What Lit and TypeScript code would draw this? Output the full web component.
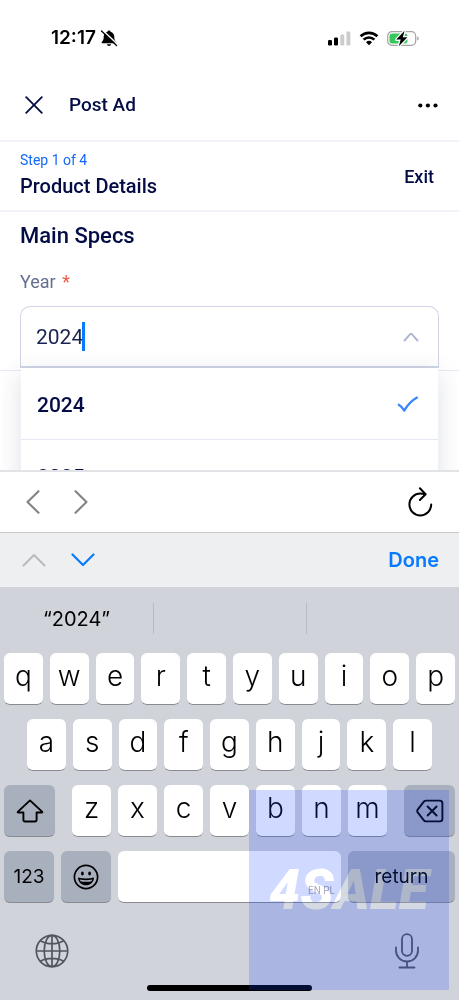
import { LitElement, html, css, svg } from "lit";
import { customElement, state } from "lit/decorators.js";

const icon = (w: number, h: number, body: unknown) =>
  html`<svg width=${w} height=${h} viewBox="0 0 ${w} ${h}" fill="none" aria-hidden="true">${body}</svg>`;

const bellOff = icon(18, 18, svg`
  <path d="M9 1.5c-.9 0-1.5.6-1.6 1.3C5 3.6 3.700 5.500 3.700 7.800c0 2.600-.5 3.700-1.700 5-.7.8-.5 1.500.5 1.500h13c1 0 1.200-.7.5-1.500-1.200-1.300-1.700-2.400-1.700-5 0-2.300-1.300-4.200-3.700-5C10.500 2.100 9.900 1.500 9 1.500z" fill="#000"/>
  <path d="M6.900 15.200h4.200c-.2 1-1 1.700-2.100 1.700s-1.900-.7-2.100-1.700z" fill="#000"/>
  <path d="M2.700 1.200 17.600 15.500" stroke="#fff" stroke-width="1.500"/>
  <path d="M1.500 2 16.500 16.500" stroke="#000" stroke-width="1.300" stroke-linecap="round"/>`);

const signal = icon(23, 15, svg`
  <rect x="0" y="9" width="4" height="5.500" rx="1.300" fill="#000"/>
  <rect x="6" y="6.500" width="4" height="8" rx="1.300" fill="#000"/>
  <rect x="12.300" y="3.500" width="4" height="11" rx="1.300" fill="#ccc"/>
  <rect x="18.400" y="0.500" width="4" height="14" rx="1.300" fill="#ccc"/>`);

const wifi = icon(20, 15, svg`
  <path d="M1.600 5.300a12 12 0 0 1 16.800 0" stroke="#000" stroke-width="2.700"/>
  <path d="M4.600 8.700a7.700 7.700 0 0 1 10.800 0" stroke="#000" stroke-width="2.500"/>
  <path d="M10 14.200 7 11.300a4.300 4.300 0 0 1 6 0z" fill="#000"/>`);

const battery = icon(32, 17, svg`
  <rect x="0.700" y="1.700" width="28" height="13.600" rx="4.300" stroke="#a3a3a3" stroke-width="1.200"/>
  <path d="M30.200 6.600c1 .3 1.500 1 1.500 1.900s-.5 1.600-1.500 1.900z" fill="#a3a3a3"/>
  <rect x="2.500" y="3.500" width="18" height="10" rx="2.700" fill="#34c759"/>
  <path d="M17.600.8 9.200 9.600h4.500l-1.900 6.600 8.600-8.900h-4.600z" fill="#000" stroke="#fff" stroke-width="2.600" paint-order="stroke" stroke-linejoin="round"/>`);

const close = icon(18, 18, svg`<path d="M1.200 1.200 16.800 16.800M16.800 1.200 1.200 16.800" stroke="#030c45" stroke-width="1.800" stroke-linecap="round"/>`);
const dots = icon(20, 5, svg`<circle cx="2.300" cy="2.500" r="2.100" fill="#000"/><circle cx="9.900" cy="2.500" r="2.100" fill="#000"/><circle cx="17.500" cy="2.500" r="2.100" fill="#000"/>`);
const caretUp = icon(16, 10, svg`<path d="m1.500 8.500 5.700-6.300q.8-.8 1.600 0l5.700 6.300" stroke="#b0b8d0" stroke-width="2" stroke-linecap="round"/>`);
const check = icon(22, 17, svg`<path d="M1.800 8.800c2.500 1.500 3.900 3.300 5.500 5.800C10.700 8.800 14.500 4.700 20 1.600" stroke="#3b86fb" stroke-width="2.300" stroke-linecap="round" stroke-linejoin="round"/>`);
const back = icon(14, 24, svg`<path d="M12.500 1.200 1.500 12l11 10.800" stroke="#838386" stroke-width="2.100" stroke-linecap="round" stroke-linejoin="round"/>`);
const forward = icon(14, 24, svg`<path d="m1.500 1.200 11 10.800-11 10.800" stroke="#838386" stroke-width="2.100" stroke-linecap="round" stroke-linejoin="round"/>`);
const reload = icon(26, 30, svg`
  <path d="M24.200 17.500A10.900 10.900 0 1 1 13.300 6.600c1.700 0 3.300.2 4.900.6" stroke="#000" stroke-width="2" stroke-linecap="round"/>
  <path d="m12.900 1.300 5.700 5.900-5.700 5.800" stroke="#000" stroke-width="2" stroke-linecap="round" stroke-linejoin="round"/>`);
const prev = icon(24, 14, svg`<path d="M1.500 12.500 12 2l10.500 10.500" stroke="#b9babb" stroke-width="2" stroke-linecap="round" stroke-linejoin="round"/>`);
const next = icon(24, 14, svg`<path d="M1.500 1.500 12 12 22.500 1.500" stroke="#087aff" stroke-width="2.200" stroke-linecap="round" stroke-linejoin="round"/>`);
const shift = icon(28, 24, svg`<path d="M14 1.400 2 12.600q-.8.900.4.900h5v7.200q0 1.800 1.800 1.800h9.600q1.800 0 1.800-1.800v-7.200h5q1.200 0 .4-.9z" stroke="#000" stroke-width="1.900" stroke-linejoin="round"/>`);
const erase = icon(28, 24, svg`
  <path d="M10.200 1.600h13.600q2.600 0 2.600 2.600v15.600q0 2.600-2.600 2.600H10.200q-1.300 0-2.200-.9l-6.300-8.100q-1-1.400 0-2.800L8 2.500q.9-.9 2.200-.9z" stroke="#000" stroke-width="1.900"/>
  <path d="m11.600 7.500 9 9m0-9-9 9" stroke="#000" stroke-width="1.900" stroke-linecap="round"/>`);
const smiley = icon(26, 26, svg`
  <circle cx="13" cy="13" r="11.600" stroke="#000" stroke-width="1.700"/>
  <ellipse cx="9.400" cy="9.600" rx="1.400" ry="2" fill="#000"/><ellipse cx="16.600" cy="9.600" rx="1.400" ry="2" fill="#000"/>
  <path d="M5 13.500c5 1.300 11 1.300 16 0-.2 4.700-3.500 7.800-8 7.800s-7.800-3.100-8-7.800z" fill="#000"/>
  <path d="M6.800 15.500c4 1 8.400 1 12.400 0l-.7 1.700c-3.500.8-7.500.8-11 0z" fill="#a9b0bd"/>`);
const globe = icon(34, 34, svg`
  <g stroke="#50555f" stroke-width="1.700"><circle cx="17" cy="17" r="15.700"/><ellipse cx="17" cy="17" rx="7.800" ry="15.700"/>
  <path d="M17 1.300v31.400M1.300 17h31.400M5.300 6.700c6.500 4 16.900 4 23.400 0M5.300 27.300c6.500-4 16.900-4 23.400 0"/></g>`);
const mic = icon(26, 36, svg`
  <g stroke="#50555f" stroke-width="1.800" stroke-linecap="round"><rect x="8" y="1.200" width="10" height="21.600" rx="5"/>
  <path d="M2 14.500v3a11 11 0 0 0 22 0v-3M13 28.500v6M5.500 34.500h15"/></g>`);

@customElement("app-root")
class AppRoot extends LitElement {
  @state() private year = "2024";

  static styles = css`
    :host {
      display: flex;
      flex-direction: column;
      position: relative;
      height: 100vh;
      overflow: hidden;
      background: #fff;
      color: #030c45;
      font-family: Roboto, "Open Sans", sans-serif;
    }
    * { box-sizing: border-box; }
    svg { display: block; flex: none; }
    button {
      display: flex;
      align-items: center;
      justify-content: center;
      margin: 0;
      padding: 0;
      border: 0;
      background: none;
      color: inherit;
      font: inherit;
    }
    h1, h2, h3, p { margin: 0; font-weight: 500; }
    .status {
      display: flex;
      align-items: center;
      flex: none;
      height: 72px;
      padding: 4px 40px 0 51px;
      color: #000;
      font: 600 19px/24px Inter, sans-serif;
    }
    .status .clock { margin-right: 4px; }
    .status .levels { display: flex; align-items: center; gap: 8px; margin-left: auto; }
    .topbar {
      display: flex;
      align-items: center;
      flex: none;
      height: 70px;
      padding: 0 21px 2px 25px;
      border-bottom: 2px solid #f1f2f9;
    }
    .topbar h1 { flex: 1; margin-left: 26px; font-size: 19px; line-height: 24px; }
    .step {
      display: flex;
      align-items: center;
      justify-content: space-between;
      flex: none;
      height: 70px;
      padding: 0 25px 0 20px;
      border-bottom: 2px solid #f1f2f9;
    }
    .titles { padding-bottom: 4px; }
    .step p { color: #1468f8; font-size: 14px; line-height: 24px; font-weight: 400; }
    .step h2 { font-size: 20px; line-height: 28px; }
    .exit { font-size: 18px; font-weight: 500; }
    .content { flex: 1; min-height: 0; overflow: hidden; }
    .specs { padding: 10px 20px 2px; border-bottom: 1px solid #e6e8f3; }
    .specs h3 { font-size: 22px; line-height: 28px; }
    .label {
      display: block;
      padding: 20px 0 12px;
      color: #65708f;
      font-size: 18px;
      line-height: 24px;
    }
    .required { margin-left: 2px; color: #eb5a4b; }
    .combo { position: relative; }
    .field {
      display: flex;
      align-items: center;
      height: 62px;
      padding: 0 19px 0 15px;
      border: 1px solid #cfd5e4;
      border-bottom-width: 2px;
      border-radius: 10px 10px 0 0;
      background: #fff;
    }
    .field input {
      width: 46px;
      padding: 0;
      border: 0;
      outline: 0;
      background: none;
      color: #1a2452;
      font: 400 21px/28px Roboto, sans-serif;
    }
    .caret { width: 3px; height: 29px; background: #087aff; }
    .field button { margin-left: auto; }
    .menu {
      position: absolute;
      top: 100%;
      left: 1px;
      right: 1px;
      background: #fff;
      box-shadow: 0 6px 24px rgba(30, 45, 80, 0.15);
      clip-path: inset(-24px -20px -40px -20px);
    }
    .option {
      width: 100%;
      height: 72px;
      justify-content: space-between;
      padding: 2px 19px 0 16px;
      border-bottom: 1px solid #e6e8f3;
      font-size: 21px;
      line-height: 28px;
      font-weight: 500;
    }
    .browser {
      display: flex;
      align-items: center;
      flex: none;
      height: 63px;
      padding: 0 26px;
      gap: 34px;
      border-top: 2px solid #e2e3e6;
      border-bottom: 1px solid #c8c9cb;
      background: #fff;
    }
    .browser .reload { margin-left: auto; }
    .assist {
      display: flex;
      align-items: center;
      flex: none;
      height: 54px;
      padding: 0 20px 0 22px;
      gap: 25px;
      background: #eeeff1;
    }
    .done { margin-left: auto; color: #087aff; font: 600 20px/24px Inter, sans-serif; }
    .keyboard {
      flex: none;
      background: #d0d3da;
      color: #000;
      font-family: Inter, sans-serif;
    }
    .suggestions {
      display: grid;
      grid-template-columns: repeat(3, 1fr);
      padding: 16px 0 19px;
    }
    .suggestions button { height: 31px; border-left: 1px solid #b9bcc3; font-size: 20px; }
    .suggestions button:first-child { border: 0; }
    .keys { display: flex; flex-direction: column; gap: 14px; padding: 0 4px; }
    .row { display: flex; gap: 7px; }
    .middle { padding: 0 23px; }
    .letters { display: flex; flex: 1; gap: 7px; margin: 0 10px; }
    .key {
      flex: 1 1 0;
      min-width: 0;
      height: 52px;
      padding-bottom: 6px;
      border-bottom: 1px solid #898b90;
      border-radius: 6px;
      background: #fff;
      font-size: 28px;
      font-weight: 300;
      line-height: 32px;
    }
    .tool { padding: 0; background: #a9b0bd; font-size: 19px; font-weight: 400; }
    .wide { flex: 0 0 51px; }
    .mode { flex: 0 0 50px; }
    .return { flex: 0 0 107px; }
    .space {
      align-items: flex-end;
      justify-content: flex-end;
      padding: 0 6px 4px;
      color: #a3a5ab;
      font: 400 10px/14px Roboto, sans-serif;
    }
    .system {
      display: flex;
      justify-content: space-between;
      padding: 30px 39px 16px 35px;
    }
    .home { width: 36%; height: 6px; margin: 0 auto 9px; border-radius: 3px; background: #000; }
    .watermark {
      position: absolute;
      right: 10px;
      bottom: 10px;
      display: flex;
      align-items: center;
      justify-content: center;
      width: 200px;
      height: 200px;
      background: rgba(20, 65, 255, 0.2);
      pointer-events: none;
    }
    .brand {
      color: rgb(51, 42, 0);
      mix-blend-mode: color-dodge;
      font: italic 900 55px/60px Roboto, sans-serif;
    }
  `;

  private key(letter: string) {
    return html`<button class="key">${letter}</button>`;
  }

  private pick(year: string) {
    this.year = year;
  }

  render() {
    return html`
      <div class="status">
        <span class="clock">12:17</span>${bellOff}
        <div class="levels">${signal}${wifi}${battery}</div>
      </div>
      <header class="topbar">
        <button aria-label="Close">${close}</button>
        <h1>Post Ad</h1>
        <button aria-label="More">${dots}</button>
      </header>
      <section class="step">
        <div class="titles"><p>Step 1 of 4</p><h2>Product Details</h2></div>
        <button class="exit">Exit</button>
      </section>
      <main class="content">
        <section class="specs">
          <h3>Main Specs</h3>
          <label class="label" for="year">Year <span class="required">*</span></label>
          <div class="combo">
            <div class="field">
              <input id="year" inputmode="numeric" autocomplete="off" .value=${this.year} />
              <span class="caret"></span>
              <button aria-label="Close list">${caretUp}</button>
            </div>
            <div class="menu" role="listbox">
              ${["2024", "2025"].map((y) => html`
                <button class="option" role="option" aria-selected=${y === this.year} @click=${() => this.pick(y)}>
                  ${y}${y === this.year ? check : ""}
                </button>`)}
            </div>
          </div>
        </section>
      </main>
      <nav class="browser">
        <button aria-label="Back">${back}</button>
        <button aria-label="Forward">${forward}</button>
        <button class="reload" aria-label="Reload">${reload}</button>
      </nav>
      <div class="assist">
        <button aria-label="Previous field">${prev}</button>
        <button aria-label="Next field">${next}</button>
        <button class="done">Done</button>
      </div>
      <section class="keyboard">
        <div class="suggestions">
          <button>“2024”</button>
          <button aria-label="Second suggestion"></button>
          <button aria-label="Third suggestion"></button>
        </div>
        <div class="keys">
          <div class="row">${[..."qwertyuiop"].map(this.key)}</div>
          <div class="row middle">${[..."asdfghjkl"].map(this.key)}</div>
          <div class="row">
            <button class="key tool wide" aria-label="Shift">${shift}</button>
            <div class="letters">${[..."zxcvbnm"].map(this.key)}</div>
            <button class="key tool wide" aria-label="Delete">${erase}</button>
          </div>
          <div class="row">
            <button class="key tool mode">123</button>
            <button class="key tool mode" aria-label="Emoji">${smiley}</button>
            <button class="key space">EN PL</button>
            <button class="key tool return">return</button>
          </div>
        </div>
        <div class="system">
          <button aria-label="Switch keyboard">${globe}</button>
          <button aria-label="Dictate">${mic}</button>
        </div>
        <div class="home"></div>
      </section>
      <div class="watermark"><span class="brand">4SALE</span></div>
    `;
  }
}
